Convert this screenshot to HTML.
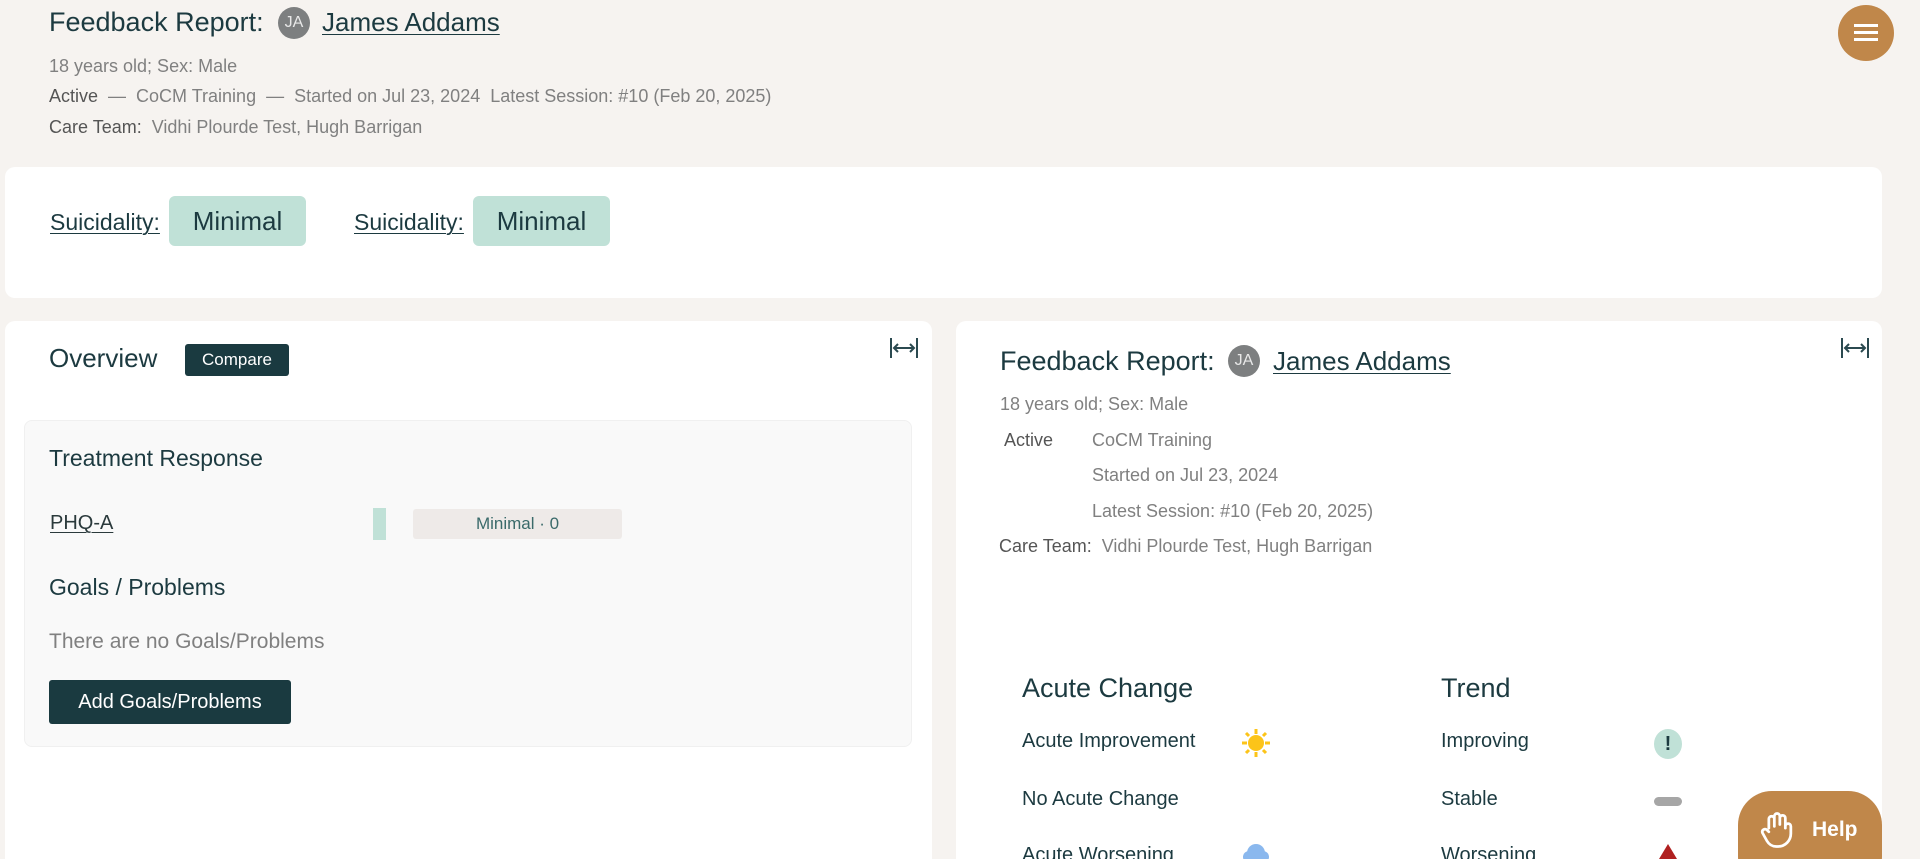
<!DOCTYPE html>
<html style="width:1920px;height:859px;overflow:hidden"><head><meta charset="utf-8"><style>
*{box-sizing:border-box;margin:0;padding:0}
body{width:1920px;height:859px;overflow:hidden;background:#f6f3f0;font-family:"Liberation Sans",sans-serif;color:#1c3a40;position:relative}
.a{position:absolute;white-space:nowrap}
.grey{color:#808080}
.card{position:absolute;background:#fff;border-radius:10px}
.av{position:absolute;width:32px;height:32px;border-radius:50%;background:#7d7f80;color:#e8e8e8;font-size:16px;display:flex;align-items:center;justify-content:center}
u{text-decoration-thickness:1px;text-underline-offset:3px}
.badge{position:absolute;background:#c0e1d7;border-radius:6px;font-size:26px;display:flex;align-items:center;justify-content:center;color:#1c3a40}
.btn{position:absolute;background:#1a3a40;color:#fff;border-radius:3px;display:flex;align-items:center;justify-content:center}
</style></head><body>

<div class="a" style="left:49px;top:7px;font-size:27px">Feedback Report:</div>
<div class="av" style="left:278px;top:7px">JA</div>
<div class="a" style="left:322px;top:7px;font-size:26px"><u>James Addams</u></div>
<div style="position:absolute;left:1838px;top:5px;width:56px;height:56px;border-radius:50%;background:#c0874a"></div>
<div style="position:absolute;left:1854px;top:24px;width:24px;height:3px;background:#fff;box-shadow:0 7px 0 #fff,0 14px 0 #fff"></div>

<div class="a grey" style="left:49px;top:56px;font-size:18px">18 years old; Sex: Male</div>
<div class="a grey" style="left:49px;top:86px;font-size:18px"><span style="color:#555">Active</span> &nbsp;— &nbsp;CoCM Training &nbsp;— &nbsp;Started on Jul 23, 2024 &nbsp;Latest Session: #10 (Feb 20, 2025)</div>
<div class="a grey" style="left:49px;top:117px;font-size:18px"><span style="color:#555">Care Team:</span> &nbsp;Vidhi Plourde Test, Hugh Barrigan</div>

<div class="card" style="left:5px;top:167px;width:1877px;height:131px"></div>
<div class="a" style="left:50px;top:209px;font-size:23px"><u>Suicidality:</u></div>
<div class="badge" style="left:169px;top:196px;width:137px;height:50px">Minimal</div>
<div class="a" style="left:354px;top:209px;font-size:23px"><u>Suicidality:</u></div>
<div class="badge" style="left:473px;top:196px;width:137px;height:50px">Minimal</div>

<div class="card" style="left:5px;top:321px;width:927px;height:538px;border-radius:10px 10px 0 0"></div>
<div class="card" style="left:956px;top:321px;width:926px;height:538px;border-radius:10px 10px 0 0"></div>

<div class="a" style="left:49px;top:343px;font-size:26px">Overview</div>
<div class="btn" style="left:185px;top:344px;width:104px;height:32px;font-size:17px">Compare</div>
<svg class="a" style="left:889px;top:337px" width="30" height="22" viewBox="0 0 30 22" fill="none" stroke="#2b4a50" stroke-width="2"><path d="M2 1v20M28 1v20M6 11h18M9 7l-4 4 4 4M21 7l4 4-4 4"/></svg>
<svg class="a" style="left:1840px;top:337px" width="30" height="22" viewBox="0 0 30 22" fill="none" stroke="#2b4a50" stroke-width="2"><path d="M2 1v20M28 1v20M6 11h18M9 7l-4 4 4 4M21 7l4 4-4 4"/></svg>

<div style="position:absolute;left:24px;top:420px;width:888px;height:327px;background:#f9f9f9;border:1px solid #f0f0f0;border-radius:8px"></div>
<div class="a" style="left:49px;top:445px;font-size:23px">Treatment Response</div>
<div class="a" style="left:50px;top:512px;font-size:20px;color:#2b3a3c"><u>PHQ-A</u></div>
<div style="position:absolute;left:373px;top:508px;width:13px;height:32px;background:#c0e1d7"></div>
<div style="position:absolute;left:413px;top:509px;width:209px;height:30px;background:#eeeae8;border-radius:3px;color:#3a6a6a;font-size:17px;display:flex;align-items:center;justify-content:center">Minimal · 0</div>
<div class="a" style="left:49px;top:574px;font-size:23px">Goals / Problems</div>
<div class="a grey" style="left:49px;top:630px;font-size:21px">There are no Goals/Problems</div>
<div class="btn" style="left:49px;top:680px;width:242px;height:44px;font-size:20px">Add Goals/Problems</div>

<div class="a" style="left:1000px;top:346px;font-size:27px">Feedback Report:</div>
<div class="av" style="left:1228px;top:345px">JA</div>
<div class="a" style="left:1273px;top:346px;font-size:26px"><u>James Addams</u></div>
<div class="a grey" style="left:1000px;top:394px;font-size:18px">18 years old; Sex: Male</div>
<div class="a" style="left:1004px;top:430px;font-size:18px;color:#555">Active</div>
<div class="a grey" style="left:1092px;top:430px;font-size:18px">CoCM Training</div>
<div class="a grey" style="left:1092px;top:465px;font-size:18px">Started on Jul 23, 2024</div>
<div class="a grey" style="left:1092px;top:501px;font-size:18px">Latest Session: #10 (Feb 20, 2025)</div>
<div class="a grey" style="left:999px;top:536px;font-size:18px"><span style="color:#555">Care Team:</span> &nbsp;Vidhi Plourde Test, Hugh Barrigan</div>

<div class="a" style="left:1022px;top:673px;font-size:27px">Acute Change</div>
<div class="a" style="left:1441px;top:673px;font-size:27px">Trend</div>
<div class="a" style="left:1022px;top:730px;font-size:20px">Acute Improvement</div>
<div class="a" style="left:1022px;top:788px;font-size:20px">No Acute Change</div>
<div class="a" style="left:1022px;top:844px;font-size:20px">Acute Worsening</div>
<div class="a" style="left:1441px;top:730px;font-size:20px">Improving</div>
<div class="a" style="left:1441px;top:788px;font-size:20px">Stable</div>
<div class="a" style="left:1441px;top:844px;font-size:20px">Worsening</div>

<svg class="a" style="left:1240px;top:727px" width="32" height="32" viewBox="0 0 32 32"><circle cx="16" cy="16" r="8" fill="#fcc419"/><g stroke="#fcc419" stroke-width="3"><path d="M16 2v5M16 25v5M2 16h5M25 16h5M6 6l3 3M23 23l3 3M6 26l3-3M23 9l3-3"/></g></svg>
<svg class="a" style="left:1240px;top:841px" width="32" height="18" viewBox="0 0 32 18"><circle cx="16" cy="12" r="9" fill="#8ab8ee"/><circle cx="9" cy="16" r="6" fill="#8ab8ee"/><circle cx="23" cy="16" r="6" fill="#8ab8ee"/></svg>
<div style="position:absolute;left:1654px;top:729px;width:28px;height:30px;border-radius:50%;background:#c0e1d7;color:#1c3a40;font-size:20px;font-weight:bold;display:flex;align-items:center;justify-content:center">!</div>
<div style="position:absolute;left:1654px;top:797px;width:28px;height:9px;border-radius:5px;background:#a6a6a6"></div>
<svg class="a" style="left:1654px;top:842px" width="28" height="17" viewBox="0 0 28 17"><path d="M14 2L26 22H2Z" fill="#b02020"/></svg>

<div style="position:absolute;left:1738px;top:791px;width:144px;height:100px;border-radius:34px;background:#c0874a"></div>
<svg class="a" style="left:1756px;top:808px" width="44" height="44" viewBox="0 0 24 24" fill="none" stroke="#fff" stroke-width="1.5" stroke-linecap="round" stroke-linejoin="round"><path d="M7 11V6a1.5 1.5 0 0 1 3 0v4M10 9V4.5a1.5 1.5 0 0 1 3 0V9M13 9V5.5a1.5 1.5 0 0 1 3 0V11M16 10a1.5 1.5 0 0 1 3 0v4a7 7 0 0 1-7 7h-1a6 6 0 0 1-5-3l-2.5-4.5a1.5 1.5 0 0 1 2.5-1.5L7 13"/></svg>
<div class="a" style="left:1812px;top:818px;font-size:21px;font-weight:bold;color:#fff">Help</div>
</body></html>
